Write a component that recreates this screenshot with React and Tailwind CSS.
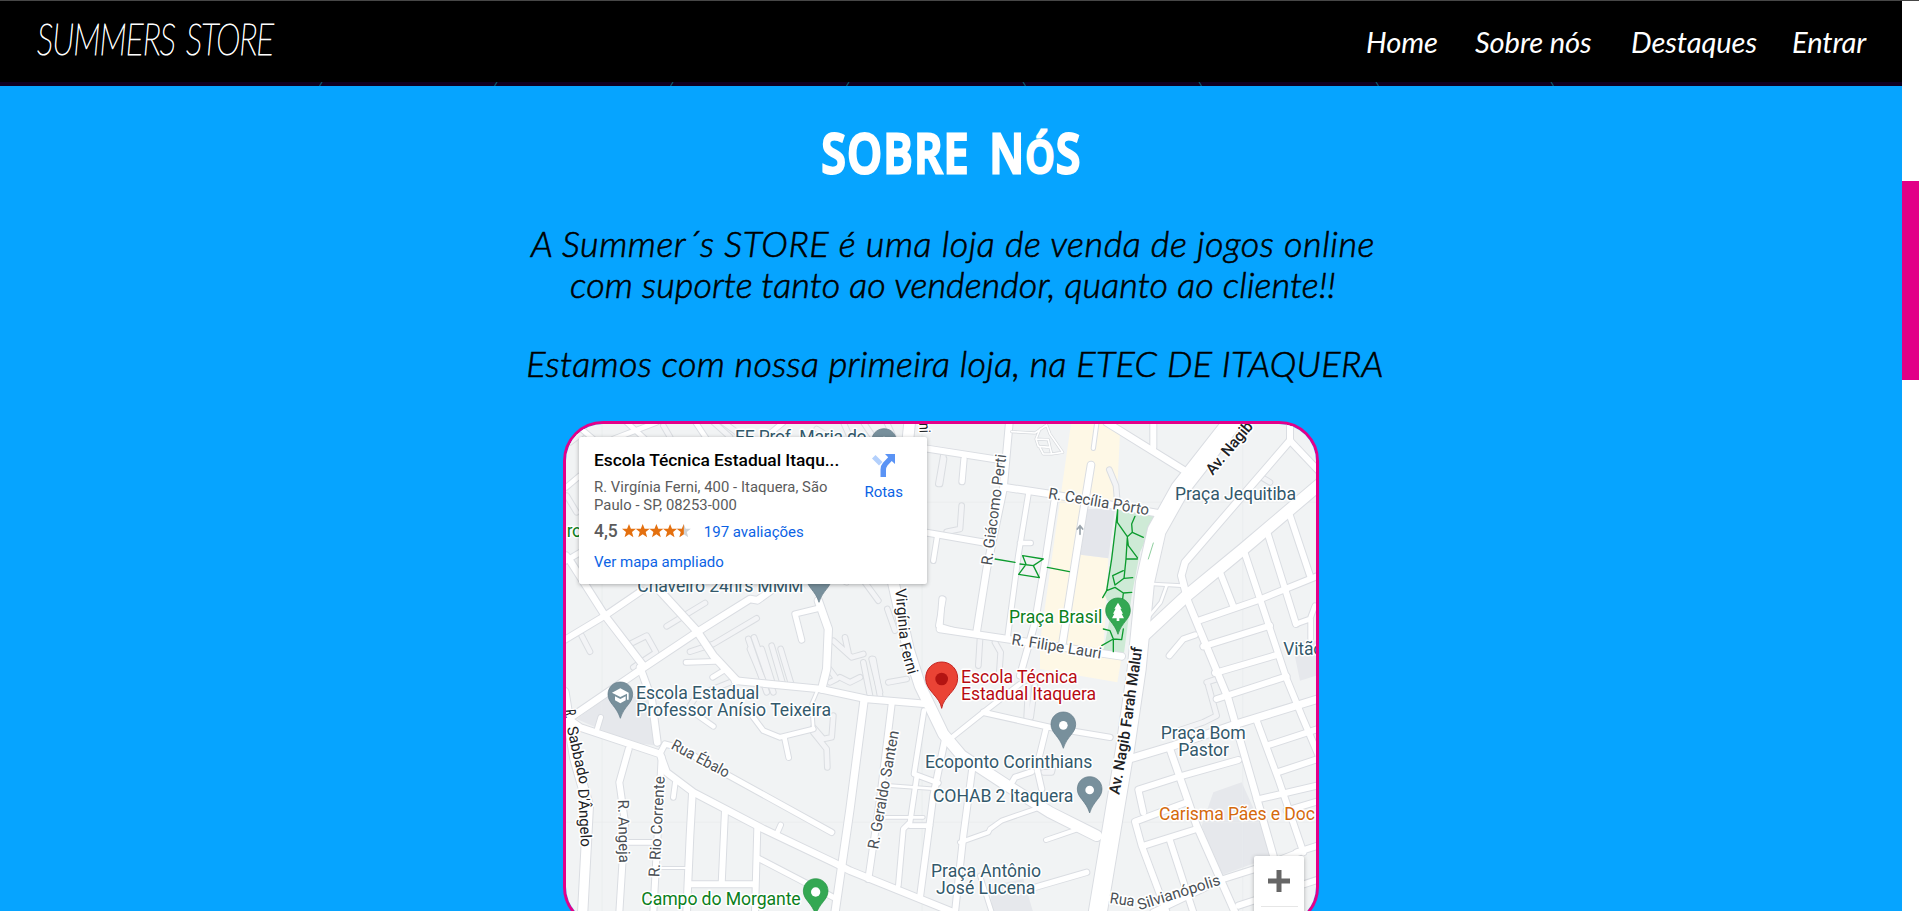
import React from "react";

/* Map geometry is stored per tile, three units to a pixel. */
const TILES = { A: [0, 0], B: [1170, 0], C: [0, 720], D: [1170, 720] };
const at = ([x, y]) => `translate(${x} ${y})`;

const ROADS = [
  ["A", 18, "M40 695L165 620L275 545"],
  ["A", 20, "M48 440L60 455L165 620L280 770"],
  ["A", 22, "M325 540L440 665L490 740L560 815"],
  ["A", 20, "M70 920L275 780L440 670L600 570L622 574L690 525"],
  ["A", 16, "M40 460L100 425"],
  ["A", 22, "M805 575L835 660L830 780L815 840"],
  ["A", 16, "M805 598L735 615L755 693"],
  ["A", 14, "M48 235L90 200M190 90L320 40M70 40L130 90M230 40L285 90M430 30L470 90M640 90L700 40"],
  ["A", 18, "M1125 118L1350 153"],
  ["A", 18, "M1125 370L1310 402"],
  ["A", 14, "M1150 455L1162 380M1180 570L1165 650L1215 665"],
  ["A", 32, "M1080 30L1030 520L1075 720L1110 830L1180 975L1235 1040L1380 1135L1500 1210L1640 1280"],
  ["B", 20, "M208 40L190 240L140 480L110 668"],
  ["B", 16, "M72 150L66 218M6 570L0 650"],
  ["B", 20, "M195 235L330 255L650 312"],
  ["B", 20, "M0 660L200 690L545 742"],
  ["B", 14, "M266 250L235 440L202 690M240 402L272 402"],
  ["B", 18, "M345 265L315 460L285 640L240 800"],
  ["B", 20, "M453 168L415 400L368 700"],
  ["B", 10, "M470 45L460 118"],
  ["B", 20, "M500 40L745 192"],
  ["B", 18, "M640 40L640 115M850 40L842 80"],
  ["B", 20, "M1050 95L735 460L724 500L745 580L865 870L905 1010L1000 1340"],
  ["B", 18, "M1050 35L1050 95L1140 190"],
  ["B", 34, "M600 690L740 560L910 420L1140 225"],
  ["B", 18, "M910 420L1000 690L1040 810L1085 920L1140 1050"],
  ["B", 18, "M982 370L1068 645M1045 305L1110 500M840 490L880 592"],
  ["B", 18, "M770 637L950 575L1140 498M790 712L990 650M825 792L1010 738"],
  ["B", 16, "M688 740L730 690L765 678"],
  ["B", 8, "M640 525L725 530M680 530L662 580L622 628"],
  ["B", 14, "M1068 645L1110 630L1125 590M1112 630L1112 690"],
  ["C", 20, "M48 205L90 235L330 315L350 370L430 430L640 540L850 640L900 665L1210 790"],
  ["C", 20, "M555 95L810 120L950 150L1130 165"],
  ["C", 20, "M270 55L305 150L322 280"],
  ["C", 14, "M408 40L495 37M488 85L520 65M595 185L640 245L690 265L790 240M703 265L716 326M430 190L490 232"],
  ["C", 8, "M790 240L785 165L800 130"],
  ["C", 22, "M942 155L900 480L855 790"],
  ["C", 18, "M1025 165L990 450L955 690"],
  ["C", 14, "M1122 185L1092 375L1165 402M1100 385L1080 520L1060 540L1045 710"],
  ["C", 18, "M1185 270L1150 440L1110 745"],
  ["C", 8, "M1020 410L1160 420M1000 505L1120 505"],
  ["C", 14, "M1080 530L1140 530"],
  ["C", 16, "M332 310L345 285L400 300L450 332L845 550"],
  ["C", 18, "M236 300L208 400L225 520L208 790"],
  ["C", 18, "M335 325L325 520L310 790"],
  ["C", 14, "M376 400L370 445M692 528L680 555M140 245L152 205"],
  ["C", 20, "M427 435L420 560L410 790"],
  ["C", 18, "M525 485L515 705M622 535L615 790M415 706L615 706"],
  ["C", 6, "M325 657L410 657"],
  ["C", 14, "M225 580L315 580"],
  ["C", 16, "M625 628L850 745"],
  ["C", 28, "M42 130L58 230L75 330L115 470L98 790"],
  ["D", 14, "M30 270L130 190L240 105"],
  ["D", 16, "M130 190L330 235L510 265M318 240L290 355L305 420M275 368L225 385L210 410"],
  ["D", 18, "M98 350L70 560L45 790"],
  ["D", 12, "M60 580L145 550L150 540L185 515L300 475M318 573L420 538M120 680L155 790"],
  ["D", 16, "M440 670L285 715M490 745L530 752"],
  ["D", 22, "M550 335L700 290L890 225L1140 148"],
  ["D", 18, "M830 150L1040 82M610 490L595 422L710 385L895 333"],
  ["D", 18, "M735 462L585 518L605 590L680 790M612 590L770 540M690 575L760 790"],
  ["D", 20, "M688 295L770 530L885 790"],
  ["D", 18, "M950 215L1015 390L1090 610M980 290L1140 238M1012 370L1140 328M950 452L1140 408M1040 485L1140 455M1070 610L1140 588"],
  ["D", 18, "M640 790L850 690L960 655L1090 605M895 770L1140 690"],
  ["B", 54, "M900 10L720 240L650 365L615 520L590 780L555 1020L470 1530"],
];

const ALLEYS = [
  ["A", "M620 628L490 705L420 728M465 582L350 652M95 680L120 728M595 690L650 850M612 685L670 850M665 710L700 830M692 720L725 830"],
  ["A", "M240 705L290 680L318 730L250 775M850 695L905 745L940 735M885 685L895 730M965 750L990 850M1012 600L1035 665M930 500L985 575M870 510L890 520"],
  ["A", "M480 30L540 84M520 40L580 84M60 100L100 70M340 50L360 84M50 260L80 310M800 60L840 84M880 40L900 84M940 40L970 84M1010 40L1030 84M1180 140L1165 225"],
  ["B", "M508 182L528 230L532 280M65 290L60 360L20 368M12 150L0 225M165 700L182 730L178 790M120 690L115 770M965 205L990 220"],
  ["C", "M600 0L640 95M635 0L665 95M830 50L860 90L840 100M870 85L900 100L930 85M940 40L960 140M970 30L990 140M1015 100L1070 90M790 250L830 300L832 355M850 200L845 265L820 270L790 235M420 170L440 140L540 100"],
  ["D", "M265 110L260 205M285 110L272 205M805 110L830 200L790 220L700 250M310 370L335 370L345 330M800 100L830 90"],
];

const Pin = ({ x, y, fill, edge, children }) => (
  <g transform={`translate(${x} ${y})`}>
    <path
      d="M0 -109C-22 -109 -37 -92 -37 -72C-37 -45 -12 -38 0 0C12 -38 37 -45 37 -72C37 -92 22 -109 0 -109Z"
      fill={fill}
      stroke={edge}
      strokeWidth="2"
    />
    {children}
  </g>
);

/* x, y, width, text, colour */
const LABELS = [
  [555, 103, 395, "EE Prof. Maria do", "#33596b"],
  [262, 548, 498, "Chaveiro 24hrs MMM", "#33596b"],
  [50, 384, 46, "ro", "#0b8020"],
  [258, 869, 370, "Escola Estadual", "#33596b"],
  [258, 921, 585, "Professor Anísio Teixeira", "#33596b"],
  [1233, 822, 350, "Escola Técnica", "#b80b12"],
  [1233, 874, 405, "Estadual Itaquera", "#b80b12"],
  [1377, 641, 280, "Praça Brasil", "#0b8020"],
  [1875, 272, 363, "Praça Jequitiba", "#33596b"],
  [2200, 738, 120, "Vitão", "#33596b"],
  [1125, 1077, 502, "Ecoponto Corinthians", "#33596b"],
  [1149, 1179, 421, "COHAB 2 Itaquera", "#33596b"],
  [1832, 989, 255, "Praça Bom", "#33596b"],
  [1885, 1042, 152, "Pastor", "#33596b"],
  [1827, 1234, 468, "Carisma Pães e Doc", "#d56a0c"],
  [1143, 1403, 330, "Praça Antônio", "#33596b"],
  [1158, 1455, 298, "José Lucena", "#33596b"],
  [274, 1487, 478, "Campo do Morgante", "#0b8020"],
];
/* x, y, width, text, rotation, colour, bold */
const STREETS = [
  [1325, 470, 335, "R. Giácomo Perti", -82.5, "#4a4f55"],
  [1493, 268, 306, "R. Cecília Pôrto", 9.5, "#4a4f55"],
  [1383, 706, 272, "R. Filipe Lauri", 9, "#4a4f55"],
  [1988, 200, 192, "Av. Nagib", -50, "#202124", 1],
  [1708, 1158, 192, "Av. Nagib", -80, "#202124", 1],
  [1743, 956, 242, "Farah Maluf", -82, "#202124", 1],
  [1036, 540, 152, "Virgínia", 85, "#202124"],
  [1048, 706, 96, "Ferni", 74, "#202124"],
  [1108, 42, 30, "ni", 88, "#202124"],
  [44, 903, 26, "R.", 84, "#202124"],
  [50, 956, 176, "Sabbado", 77, "#202124"],
  [84, 1140, 174, "D'Ângelo", 87, "#202124"],
  [204, 1172, 190, "R. Angeja", 89, "#4a4f55"],
  [328, 1405, 303, "R. Rio Corrente", -87, "#4a4f55"],
  [361, 1018, 190, "Rua Ébalo", 28, "#4a4f55"],
  [984, 1322, 360, "R. Geraldo Santen", -80, "#4a4f55"],
  [1678, 1482, 74, "Rua", 8, "#4a4f55"],
  [1768, 1504, 258, "Silvianópolis", -17.5, "#4a4f55"],
];

function StreetMap() {
  return (
    <svg className="block h-full w-full" viewBox="48 45 2250 1500" preserveAspectRatio="xMinYMin slice" fontFamily="Roboto, sans-serif">
      <rect x="0" y="0" width="2400" height="1600" fill="#f1f3f4" />
      <g fill="#e6e8ec">
        <path d="M80 930L190 850L290 870L322 1010L240 1000Z" />
        <path d="M1990 1150L2075 1120L2175 1340L2010 1400L1955 1250Z" />
        <path d="M2225 695L2300 695L2300 800L2250 815Z" />
        <path d="M1320 1430L1420 1410L1460 1545L1330 1545Z" />
      </g>
      <g transform={at(TILES.B)}>
        <path d="M395 30H542L530 280L440 275L422 437L505 448L490 730L545 745L532 820L300 780L300 700L345 380Z" fill="#fef8e6" />
        <path d="M440 300L525 300L505 448L422 437Z" fill="#e4e6eb" />
        <path d="M535 300L650 322L600 430L575 560L552 732L490 726L515 600L495 560Z" fill="#ceead6" />
      </g>
      <path d="M156 0V1600M0 1240H2400M1116 0V1600M2078 0V1600M1120 280H2400" stroke="#e9ebed" strokeWidth="2" />
      <g fill="none" strokeLinecap="round" strokeLinejoin="round">
        {ALLEYS.map(([t, d]) => (
          <path key={d} transform={at(TILES[t])} d={d} stroke="#dadde1" strokeWidth="20" />
        ))}
        {ALLEYS.map(([t, d]) => (
          <path key={d} transform={at(TILES[t])} d={d} stroke="#f3f4f6" strokeWidth="14" />
        ))}
        {ROADS.map(([t, w, d]) => (
          <path key={d} transform={at(TILES[t])} d={d} stroke="#dadde2" strokeWidth={w + 6} />
        ))}
        {ROADS.map(([t, w, d]) => (
          <path key={d} transform={at(TILES[t])} d={d} stroke="#ffffff" strokeWidth={w} />
        ))}
        <g transform={at(TILES.B)}>
          <path d="M215 68L285 72L320 48L330 75L368 130L335 135L330 115L295 112L288 90L300 60M288 90L325 92L330 115M298 112L310 135L335 135" stroke="#d5d8dc" strokeWidth="9" />
          <path d="M215 68L285 72L320 48L330 75L368 130L335 135L330 115L295 112L288 90L300 60M288 90L325 92L330 115M298 112L310 135L335 135" stroke="#fff" strokeWidth="5" />
          <path
            d="M165 450L225 460M322 475L388 488M248 440L310 450L280 470L298 506L236 496L258 466ZM240 465L280 470M533 302L515 450L500 545L488 566M533 302L532 340L562 383M562 383L577 370L610 385M585 322L575 345L577 370M562 385L565 410L592 446M592 450L558 450M562 385L558 450L552 508L525 528L518 500L550 485M552 508L578 506M500 545L525 535L550 552L575 550M550 552L548 570M490 660L510 665L520 690L485 710M520 690L545 692L550 660M520 690V728"
            stroke="#0c9b2e"
            strokeWidth="4"
          />
          <path d="M640 402L625 450" stroke="#8fcf9f" strokeWidth="3" />
          <path d="M420 376V350M412 360L420 350L428 360" stroke="#9aa4ac" strokeWidth="5" />
        </g>
      </g>
      <Pin x="1002" y="168" fill="#78909c" edge="#5d7683"><circle cy="-72" r="13" fill="#fff" /></Pin>
      <Pin x="807" y="580" fill="#78909c" edge="#5d7683" />
      <Pin x="211" y="928" fill="#78909c" edge="#5d7683">
        <path d="M0 -90L-25 -77L0 -64L20 -74V-56H25V-77ZM-16 -66V-54L0 -45L16 -54V-66L0 -58Z" fill="#fff" />
      </Pin>
      <Pin x="1540" y="1018" fill="#78909c" edge="#5d7683"><circle cy="-69" r="13" fill="#fff" /></Pin>
      <Pin x="1619" y="1212" fill="#78909c" edge="#5d7683"><circle cy="-69" r="13" fill="#fff" /></Pin>
      <Pin x="797" y="1518" fill="#34a853" edge="#1e8e3e"><circle cy="-69" r="14" fill="#fff" /></Pin>
      <Pin x="1704" y="676" fill="#34a853" edge="#1e8e3e">
        <path d="M0 -95L-11 -77H-7L-15 -62H-11L-18 -48H-4V-40H4V-48H18L11 -62H15L7 -77H11Z" fill="#fff" />
      </Pin>
      <g transform="translate(1175 898)">
        <path d="M0 0C-5 -36 -48 -52 -48 -90C-48 -118 -27 -139 0 -139C27 -139 48 -118 48 -90C48 -52 5 -36 0 0Z" fill="#ea4335" stroke="#c5221f" strokeWidth="3" />
        <circle cy="-88" r="19" fill="#b31412" />
      </g>
      <g fontSize="53" paintOrder="stroke" strokeLinejoin="round" stroke="#fff" strokeWidth="9">
        {LABELS.map(([x, y, w, s, c]) => (
          <text key={s} x={x} y={y} fill={c} textLength={w}>{s}</text>
        ))}
        <g fontSize="46" strokeWidth="10">
          {STREETS.map(([x, y, w, s, r, c, bold]) => (
            <text key={s + y} transform={`translate(${x} ${y}) rotate(${r})`} fill={c} textLength={w} lengthAdjust="spacingAndGlyphs" fontWeight={bold ? 500 : 400}>
              {s}
            </text>
          ))}
        </g>
      </g>
    </svg>
  );
}

const STAR = "M7 0L8.9 4.8H14L10 8L11.4 13.2L7 10.2L2.6 13.2L4 8L0 4.8H5.1Z";

function PlaceCard() {
  return (
    <div className="absolute left-[13px] top-[13px] flex h-[147px] w-[348px] justify-between rounded-[2px] bg-white pl-[15px] pr-[24px] shadow-[0_1px_4px_rgba(0,0,0,0.3)]">
      <div className="flex flex-col whitespace-nowrap pt-[12px]">
        <div className="text-[17.4px] font-medium leading-[22px] tracking-[-0.03px] text-black">Escola Técnica Estadual Itaqu...</div>
        <div className="mt-[7px] text-[14.8px] leading-[18px] tracking-[0.05px] text-[#5b5b5b]">
          R. Virgínia Ferni, 400 - Itaquera, São
          <br />
          Paulo - SP, 08253-000
        </div>
        <div className="mt-[6px] flex h-[22px] items-center">
          <span className="text-[17.5px] font-medium text-[#5b5b5b]">4,5</span>
          <svg className="ml-[4px]" width="69" height="14" viewBox="0 0 69 14">
            {[0, 1, 2, 3].map((i) => (
              <path key={i} d={STAR} transform={`translate(${i * 13.7} 0)`} fill="#e4700f" />
            ))}
            <path d={STAR} transform="translate(54.8 0)" fill="#d0d3d6" />
            <path d="M7 0V10.2L2.6 13.2L4 8L0 4.8H5.1Z" transform="translate(54.8 0)" fill="#e4700f" />
          </svg>
          <span className="ml-[13px] pt-[2px] text-[15px] text-[#0b63e5]">197 avaliações</span>
        </div>
        <div className="mt-[10px] text-[15px] leading-[20px] text-[#0b63e5]">Ver mapa ampliado</div>
      </div>
      <div className="flex flex-col items-center pt-[17px] text-[#0b63e5]">
        <svg width="24" height="24" viewBox="0 0 24 24">
          <path d="M3.5 1L0 4.5L7 11.5L10.5 8Z" fill="#b3d0fc" />
          <path d="M13 0H23V10L19.7 7L15.5 11.5Q14 13.5 14 16V23H8.5V15.5Q8.5 11.5 11 8.8L16.2 3.3Z" fill="#5a93f5" />
        </svg>
        <span className="mt-[4px] text-[15px] leading-[20px]">Rotas</span>
      </div>
    </div>
  );
}

const NAV = [
  ["Home", "w-[72px]"],
  ["Sobre nós", "w-[119px]"],
  ["Destaques", "w-[124px]"],
  ["Entrar", "w-[73px]"],
];
const TICKS = [321, 496, 672, 848, 1024, 1200, 1377, 1552];

export default function App() {
  return (
    <div className="flex h-[911px] w-[1919px] flex-col overflow-hidden font-['Lato',sans-serif]">
      <div className="h-px shrink-0 bg-[#474747]" />
      <div className="flex min-h-0 flex-1">
        <div className="flex w-[1902px] flex-col bg-[#06a4ff]">
          <header className="flex h-[81px] shrink-0 items-center justify-between bg-black pl-[37px] pr-[37px] text-white">
            <div className="w-[232px] whitespace-nowrap">
              <span className="relative -top-[3px] inline-block origin-left scale-x-[0.765] text-[43px] font-thin italic leading-[60px] tracking-[-1.2px] [-webkit-text-stroke:1px_white] [word-spacing:4px]">
                SUMMERS STORE
              </span>
            </div>
            <nav className="flex gap-[37px] whitespace-nowrap text-[28px] italic leading-[34px]">
              {NAV.map(([label, w]) => (
                <a key={label} className={w}>
                  <span className="inline-block origin-left scale-x-[1.04] tracking-[-0.1px]">{label}</span>
                </a>
              ))}
            </nav>
          </header>
          <div className="h-[4px] shrink-0 bg-[#0f0020]">
            <svg className="block" width="1902" height="4" viewBox="0 0 1902 4">
              {TICKS.map((x) => (
                <path key={x} d={x < 940 ? `M${x - 1.5} 4L${x + 1} 0` : `M${x - 1} 0L${x + 1.5} 4`} stroke="#0b5568" strokeWidth="1.3" />
              ))}
            </svg>
          </div>
          <main className="flex flex-col items-center">
            <h1 className="mt-[29px] h-[74px] whitespace-nowrap pl-[2px] font-['Open_Sans',sans-serif] text-[55px] font-semibold leading-[74px] text-white">
              <span className="inline-block scale-x-[0.8] tracking-[2px] [-webkit-text-stroke:3px_white] [stroke-linejoin:round] [word-spacing:8px]">
                SOBRE N<span className="text-[46px]">Ó</span>S
              </span>
            </h1>
            <div className="mt-[34px] flex flex-col items-center whitespace-nowrap pl-[4px] text-[36px] font-light italic leading-[41px] text-black [-webkit-text-stroke:0.6px_black]">
              <p className="tracking-[0.54px]">A Summer´s STORE é uma loja de venda de jogos online</p>
              <p className="tracking-[0.05px]">com suporte tanto ao vendendor, quanto ao cliente!!</p>
              <p className="mt-[38px] pl-[4px] tracking-[0.31px]">Estamos com nossa primeira loja, na ETEC DE ITAQUERA</p>
            </div>
            <div className="relative mr-[20px] mt-[37px] h-[506px] w-[756px] shrink-0 overflow-hidden rounded-[40px] border-[3px] border-[#e3008a] font-['Roboto',sans-serif]">
              <StreetMap />
              <PlaceCard />
              <div className="absolute left-[688px] top-[432px] flex h-[100px] w-[50px] flex-col items-center rounded-[2px] bg-white pt-[14px] shadow-[0_1px_4px_rgba(0,0,0,0.3)]">
                <svg width="22" height="22" viewBox="0 0 22 22">
                  <path d="M11 0V22M0 11H22" stroke="#666" strokeWidth="5" />
                </svg>
                <div className="mt-[14px] h-px w-[37px] bg-[#e6e6e6]" />
              </div>
            </div>
          </main>
        </div>
        <aside className="w-[17px] bg-white pt-[180px]">
          <div className="h-[199px] bg-[#e20087]" />
        </aside>
      </div>
    </div>
  );
}
